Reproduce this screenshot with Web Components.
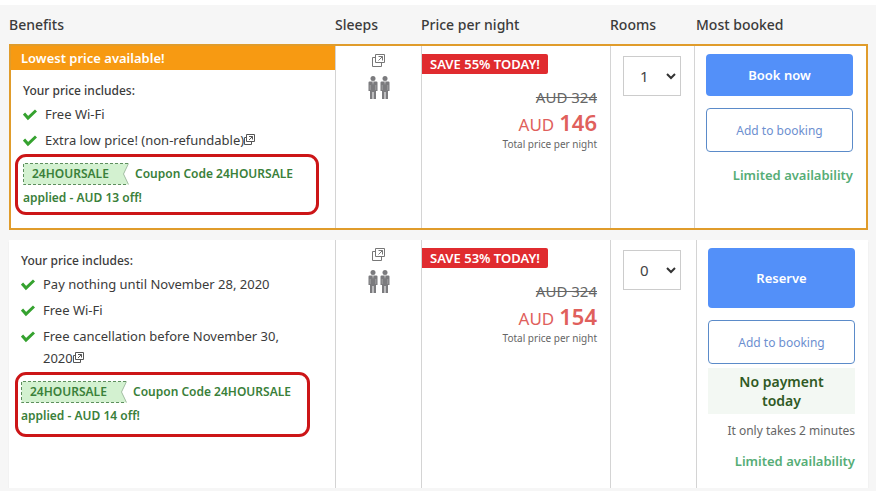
<!DOCTYPE html>
<html lang="en">
<head>
<meta charset="utf-8">
<title>Room rates</title>
<style>
  html { background: #f6f6f6; }
  body { margin: 0; border-top: 5px solid #fff; font: 13px/22px "Noto Sans", "Open Sans", sans-serif; color: #3b3b3b; }
</style>
</head>
<body>
<rate-table></rate-table>

<template id="t-rate-table">
  <style>
    :host { display: block; padding: 0 8px 0 9px; }
    table { display: block; }
    thead, tbody { display: block; }
    tr { display: grid; grid-template-columns: 326fr 86fr 189fr 86fr 172fr; }
    th { font-size: 14px; line-height: 39px; font-weight: 500; text-align: left; padding: 0; color: #3b3b3b; }
    td { padding: 8px 0 0; min-width: 0; border-left: 1px solid #d4d4d4; }
    tbody tr { background: #fff; }
    tbody td:first-child { border-left: 0; }
    tr.best { border: 2px solid #e09c2b; margin-bottom: 10px; grid-template-columns: 324fr 86fr 189fr 84fr 172fr; }
    tr.plain { box-shadow: 0 2px 1px #e2e2e2; }
    .benefits { padding: 10px 16px 13px 12px; }
    .plain .benefits { padding-right: 25px; }
    .best .benefits { padding-top: 0; }
    .ribbon { margin: 0 -16px 10px -12px; padding: 0 10px; background: #f79a12; color: #fff; font-weight: 600; line-height: 24px; }
    .sleeps { text-align: center; }
    .rooms { padding: 10px 12px 0; }
    .book { padding: 8px 13px 16px 11px; }
  </style>
  <table>
    <thead>
      <tr><th scope="col">Benefits</th><th scope="col">Sleeps</th><th scope="col">Price per night</th><th scope="col">Rooms</th><th scope="col">Most booked</th></tr>
    </thead>
    <tbody>
      <tr class="best">
        <td class="benefits">
          <div class="ribbon">Lowest price available!</div>
          <benefit-list>
            <benefit-item>Free Wi-Fi</benefit-item>
            <benefit-item more>Extra low price! (non-refundable)</benefit-item>
          </benefit-list>
          <coupon-note code="24HOURSALE">Coupon Code 24HOURSALE applied - AUD 13 off!</coupon-note>
        </td>
        <td class="sleeps"><guest-count></guest-count></td>
        <td><night-price was="AUD 324" amount="146">SAVE 55% TODAY!</night-price></td>
        <td class="rooms"><room-select value="1"></room-select></td>
        <td class="book"><book-panel action="Book now"></book-panel></td>
      </tr>
      <tr class="plain">
        <td class="benefits">
          <benefit-list>
            <benefit-item>Pay nothing until November 28, 2020</benefit-item>
            <benefit-item>Free Wi-Fi</benefit-item>
            <benefit-item more>Free cancellation before November 30, 2020</benefit-item>
          </benefit-list>
          <coupon-note code="24HOURSALE" roomy>Coupon Code 24HOURSALE applied - AUD 14 off!</coupon-note>
        </td>
        <td class="sleeps"><guest-count></guest-count></td>
        <td><night-price was="AUD 324" amount="154">SAVE 53% TODAY!</night-price></td>
        <td class="rooms"><room-select value="0"></room-select></td>
        <td class="book"><book-panel action="Reserve" tall>
          <div slot="promo">No payment today</div>
          <div slot="hint">It only takes 2 minutes</div>
        </book-panel></td>
      </tr>
    </tbody>
  </table>
</template>

<template id="t-benefit-list">
  <style>
    :host { display: flex; flex-direction: column; gap: 4px; }
    .title { font-size: 12px; font-weight: 500; margin-bottom: -3px; }
  </style>
  <div class="title">Your price includes:</div>
  <slot></slot>
</template>

<template id="t-benefit-item">
  <style>
    :host { display: flex; gap: 8px; }
    .tick { flex: none; width: 14px; height: 22px; }
    .more { display: none; vertical-align: 0; }
    :host([more]) .more { display: inline; }
  </style>
  <svg class="tick" viewBox="0 0 14 22"><path d="M1 10.500 5 15 13 7.500" fill="none" stroke="#35a22f" stroke-width="3"/></svg>
  <div><slot></slot><svg class="more" width="11" height="11" viewBox="0 0 11 11" fill="none" stroke="#555"><path d="M2.500.5h8v7h-8zM2.500 3.500h-2v7h7v-3M5 2.500h3.500v3M8.500 2.500 5 6"/></svg></div>
</template>

<template id="t-coupon-note">
  <style>
    :host { display: block; margin: 3px 0 0 -8px; padding: 5px 5px 2px; border: 3px solid #cc1517; border-radius: 11px; font-size: 12px; font-weight: 600; line-height: 24px; color: #3a803a; }
    :host([roomy]) { margin-left: -6px; padding: 5px 3px 6px; }
    .tag { display: inline-grid; vertical-align: top; height: 22px; width: 106px; margin: 1px 6px 0 0; line-height: 21px; }
    .tag > * { grid-area: 1 / 1; }
    .tag span { position: relative; padding-left: 9px; }
  </style>
  <span class="tag">
    <svg width="106" height="22" viewBox="0 0 106 22"><path d="M.5.5h105l-5 10.500 5 10.500H.5z" fill="#d3f1d0"/><path d="M105 .5H.5v21H105" fill="none" stroke="#5d8f5d" stroke-dasharray="3 2"/><path d="M105.500.5l-5 10.500 5 10.500" fill="none" stroke="#a3bda3"/></svg>
    <span></span>
  </span><slot></slot>
</template>

<template id="t-guest-count">
  <style>
    :host { display: flex; flex-direction: column; align-items: center; gap: 9px; }
  </style>
  <svg width="13" height="13" viewBox="0 0 13 13" fill="none" stroke="#777"><path d="M3.500.5h9v8h-9zM3.500 3.500h-3v9h9v-4M6.500 2.500h4v4M10.500 2.500 6.500 6.500"/></svg>
  <svg width="22" height="23" viewBox="0 0 22 23" fill="#7b7b7e" role="img" aria-label="2 adults">
    <g id="adult"><circle cx="5" cy="2.500" r="2.500"/><path d="M1.500 5.500h7q1 0 1 1V15H8v8H5.500v-7h-1v7H2v-8H.5V6.500q0-1 1-1z"/><path d="M4.300 5.500h1.400L5 9z" fill="#fff" opacity=".6"/><path d="M2.200 9v5M7.800 9v5" stroke="#c4c4c4" stroke-width=".5"/></g>
    <use href="#adult" x="12"/>
  </svg>
</template>

<template id="t-night-price">
  <style>
    :host { display: flex; flex-direction: column; text-align: right; padding-right: 13px; }
    .save { align-self: flex-start; background: #e02b2f; color: #fff; font-size: 13px; font-weight: 600; line-height: 20px; padding: 0 8px; margin-bottom: 12px; border-radius: 0 2px 2px 0; }
    s { font-size: 15px; line-height: 22px; color: #666; }
    .now { display: flex; justify-content: flex-end; align-items: baseline; gap: 5px; color: #e0605c; font-size: 17px; line-height: 28px; }
    .now b { font-size: 22px; font-weight: 600; }
    small { font-size: 10px; line-height: 10px; color: #666; }
  </style>
  <span class="save"><slot></slot></span>
  <s></s>
  <span class="now"><span>AUD</span><b></b></span>
  <small>Total price per night</small>
</template>

<template id="t-room-select">
  <style>
    :host { display: grid; align-items: center; max-width: 58px; }
    select, svg { grid-area: 1 / 1; }
    select { appearance: none; width: 100%; height: 40px; margin: 0; border: 1px solid #ccc; border-radius: 0; background: #fff; padding: 0 0 0 16px; font: 15px "Noto Sans", sans-serif; color: #444; }
    svg { justify-self: end; margin-right: 5px; pointer-events: none; z-index: 1; }
  </style>
  <select aria-label="Rooms"><option>0</option><option>1</option><option>2</option></select>
  <svg width="10" height="8" viewBox="0 0 10 8"><path d="M1 2l4 4 4-4" fill="none" stroke="#333" stroke-width="2"/></svg>
</template>

<template id="t-book-panel">
  <style>
    :host { display: flex; flex-direction: column; text-align: right; }
    button { font: 600 13px "Noto Sans", sans-serif; border-radius: 4px; padding: 0; }
    .main { height: 42px; border: 0; background: #5390f9; color: #fff; margin-bottom: 12px; }
    :host([tall]) .main { height: 60px; }
    .add { height: 44px; border: 1px solid #5b8bc9; background: #fff; color: #6d8fd0; font-size: 12px; font-weight: 400; }
    ::slotted([slot=promo]) { margin: 4px 0 6px; padding: 4px 30px; background: #f3f8f3; color: #2f5a24; font-size: 14px; font-weight: 600; line-height: 19px; text-align: center; }
    ::slotted([slot=hint]) { font-size: 12px; color: #666; margin-bottom: -4px; }
    .left { margin-top: 12px; font-weight: 600; color: #56ad76; }
  </style>
  <button class="main" type="button"></button>
  <button class="add" type="button">Add to booking</button>
  <slot name="promo"></slot>
  <slot name="hint"></slot>
  <div class="left">Limited availability</div>
</template>

<script>
  class TemplateElement extends HTMLElement {
    constructor() {
      super();
      const t = document.getElementById('t-' + this.localName);
      this.attachShadow({ mode: 'open' }).append(document.importNode(t.content, true));
    }
    find(selector) { return this.shadowRoot.querySelector(selector); }
  }
  customElements.define('benefit-list', class extends TemplateElement {});
  customElements.define('benefit-item', class extends TemplateElement {});
  customElements.define('coupon-note', class extends TemplateElement {
    connectedCallback() { this.find('.tag span').textContent = this.getAttribute('code'); }
  });
  customElements.define('guest-count', class extends TemplateElement {});
  customElements.define('night-price', class extends TemplateElement {
    connectedCallback() {
      this.find('s').textContent = this.getAttribute('was');
      this.find('b').textContent = this.getAttribute('amount');
    }
  });
  customElements.define('room-select', class extends TemplateElement {
    connectedCallback() { this.find('select').value = this.getAttribute('value'); }
  });
  customElements.define('book-panel', class extends TemplateElement {
    connectedCallback() { this.find('.main').textContent = this.getAttribute('action'); }
  });
  customElements.define('rate-table', class extends TemplateElement {});
</script>
</body>
</html>
